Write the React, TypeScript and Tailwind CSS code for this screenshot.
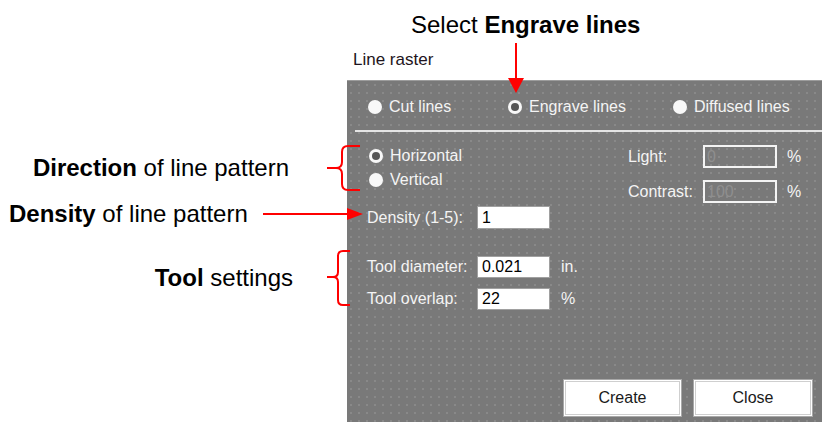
import React from "react";

function Radio({ label, checked = false, className = "" }: { label: string; checked?: boolean; className?: string }) {
  return (
    <div className={"flex items-center h-[20px] gap-[7px] " + className}>
      {checked ? (
        <span className="w-[14px] h-[14px] rounded-full bg-[#f8f8f8] flex items-center justify-center shrink-0">
          <span className="w-[8px] h-[8px] rounded-full bg-[#565656]" />
        </span>
      ) : (
        <span className="w-[14px] h-[14px] rounded-full bg-[#f8f8f8] shrink-0" />
      )}
      <span className="whitespace-nowrap">{label}</span>
    </div>
  );
}

export default function App() {
  return (
    <div className="relative w-[822px] h-[422px] overflow-hidden bg-white font-['Liberation_Sans',Arial,sans-serif]">
      {/* header */}
      <div className="h-[80px] flex flex-col">
        <div className="pl-[411px] pt-[11px] text-[24px] leading-[28px] text-black whitespace-nowrap">
          Select <b>Engrave lines</b>
        </div>
        <div className="pl-[353px] mt-[11px] text-[17px] leading-[20px] text-[#1e1420]">Line raster</div>
      </div>

      {/* top arrow (overlaps panel) */}
      <svg className="absolute left-[508px] top-[43px] z-10" width="16" height="50" viewBox="0 0 16 50">
        <line x1="8" y1="0" x2="8" y2="37" stroke="#ff0000" strokeWidth="2" />
        <polygon points="0,35 16,35 8,50" fill="#ff0000" />
      </svg>

      <div className="flex h-[342px]">
        {/* annotations */}
        <div className="relative z-10 w-[347px] shrink-0 flex flex-col text-[24px] leading-[28px] text-black">
          <div className="mt-[65px] h-[46px] mr-[-13px] flex items-center justify-end gap-[38px]">
            <span className="whitespace-nowrap">
              <b>Direction</b> of line pattern
            </span>
            <svg width="33" height="46" viewBox="0 0 33 46" className="shrink-0">
              <path
                d="M33 1 H21 Q15 1 15 7 V17 Q15 23 9 23 H0 M9 23 Q15 23 15 29 V39 Q15 45 21 45 H33"
                stroke="#ff0000"
                strokeWidth="2"
                fill="none"
              />
            </svg>
          </div>
          <div className="mt-[13px] h-[20px] mr-[-16px] pl-[9px] flex items-center justify-between">
            <span className="whitespace-nowrap">
              <b>Density</b> of line pattern
            </span>
            <svg width="100" height="14" viewBox="0 0 100 14" className="shrink-0">
              <line x1="0" y1="7" x2="86" y2="7" stroke="#ff0000" strokeWidth="2" />
              <polygon points="84,1 100,7 84,13" fill="#ff0000" />
            </svg>
          </div>
          <div className="mt-[26px] h-[56px] mr-[-3px] flex items-center justify-end gap-[34px]">
            <span className="whitespace-nowrap">
              <b>Tool</b> settings
            </span>
            <svg width="23" height="56" viewBox="0 0 23 56" className="shrink-0">
              <path
                d="M23 1 H16 Q11 1 11 6 V22 Q11 27 6 27 H0 M6 27 Q11 27 11 32 V50 Q11 55 16 55 H23"
                stroke="#ff0000"
                strokeWidth="2"
                fill="none"
              />
            </svg>
          </div>
        </div>

        {/* dialog panel */}
        <div className="flex-1 h-[342px] border-t border-[#9c9c9c] bg-[#797979] bg-[radial-gradient(circle,#898989_0.8px,transparent_1.2px)] bg-[length:8px_8px] text-[16px] leading-[20px] text-[#f4f4f4] flex flex-col">
          <div className="flex pt-[16px]">
            <Radio className="ml-[21px] w-[140px]" label="Cut lines" />
            <Radio checked className="w-[165px]" label="Engrave lines" />
            <Radio label="Diffused lines" />
          </div>
          <div className="mt-[13px] ml-[8px] h-[2px] bg-[#e4e4e4]" />

          <div className="flex">
            <div className="flex flex-col pl-[22px] w-[281px]">
              <Radio checked className="mt-[14px]" label="Horizontal" />
              <Radio className="mt-[4px]" label="Vertical" />
            </div>
            <div className="flex flex-col">
              <div className="mt-[13px] flex items-center h-[23px]">
                <span className="w-[75px]">Light:</span>
                <div className="w-[74px] h-[23px] border-2 border-[#f4f4f4] pl-[2px] leading-[19px] text-[#8f8f8f]">0</div>
                <span className="ml-[10px]">%</span>
              </div>
              <div className="mt-[12px] flex items-center h-[23px]">
                <span className="w-[75px]">Contrast:</span>
                <div className="w-[74px] h-[23px] border-2 border-[#f4f4f4] pl-[2px] leading-[19px] text-[#8f8f8f]">100</div>
                <span className="ml-[10px]">%</span>
              </div>
            </div>
          </div>

          <div className="mt-[3px] flex items-center h-[23px] pl-[20px]">
            <span className="w-[110px] whitespace-nowrap">Density (1-5):</span>
            <div className="w-[73px] h-[23px] bg-white border border-[#a0a0a0] pl-[4px] leading-[21px] text-black">1</div>
          </div>
          <div className="mt-[27px] flex items-center h-[22px] pl-[20px]">
            <span className="w-[110px] whitespace-nowrap">Tool diameter:</span>
            <div className="w-[73px] h-[22px] bg-white border border-[#a0a0a0] pl-[4px] leading-[20px] text-black">0.021</div>
            <span className="ml-[11px]">in.</span>
          </div>
          <div className="mt-[10px] flex items-center h-[22px] pl-[20px]">
            <span className="w-[110px] whitespace-nowrap">Tool overlap:</span>
            <div className="w-[73px] h-[22px] bg-white border border-[#a0a0a0] pl-[4px] leading-[20px] text-black">22</div>
            <span className="ml-[11px]">%</span>
          </div>

          <div className="mt-[69px] flex pl-[216px] gap-[11px]">
            <button className="w-[119px] h-[38px] bg-white border border-[#a8a8a8] shadow-[inset_0_0_0_1px_#ffffff,inset_0_0_0_2px_#cfcfcf] text-[#1a1a1a] text-[16px]">
              Create
            </button>
            <button className="w-[120px] h-[38px] bg-white border border-[#a8a8a8] shadow-[inset_0_0_0_1px_#ffffff,inset_0_0_0_2px_#cfcfcf] text-[#1a1a1a] text-[16px]">
              Close
            </button>
          </div>
        </div>
      </div>
    </div>
  );
}
